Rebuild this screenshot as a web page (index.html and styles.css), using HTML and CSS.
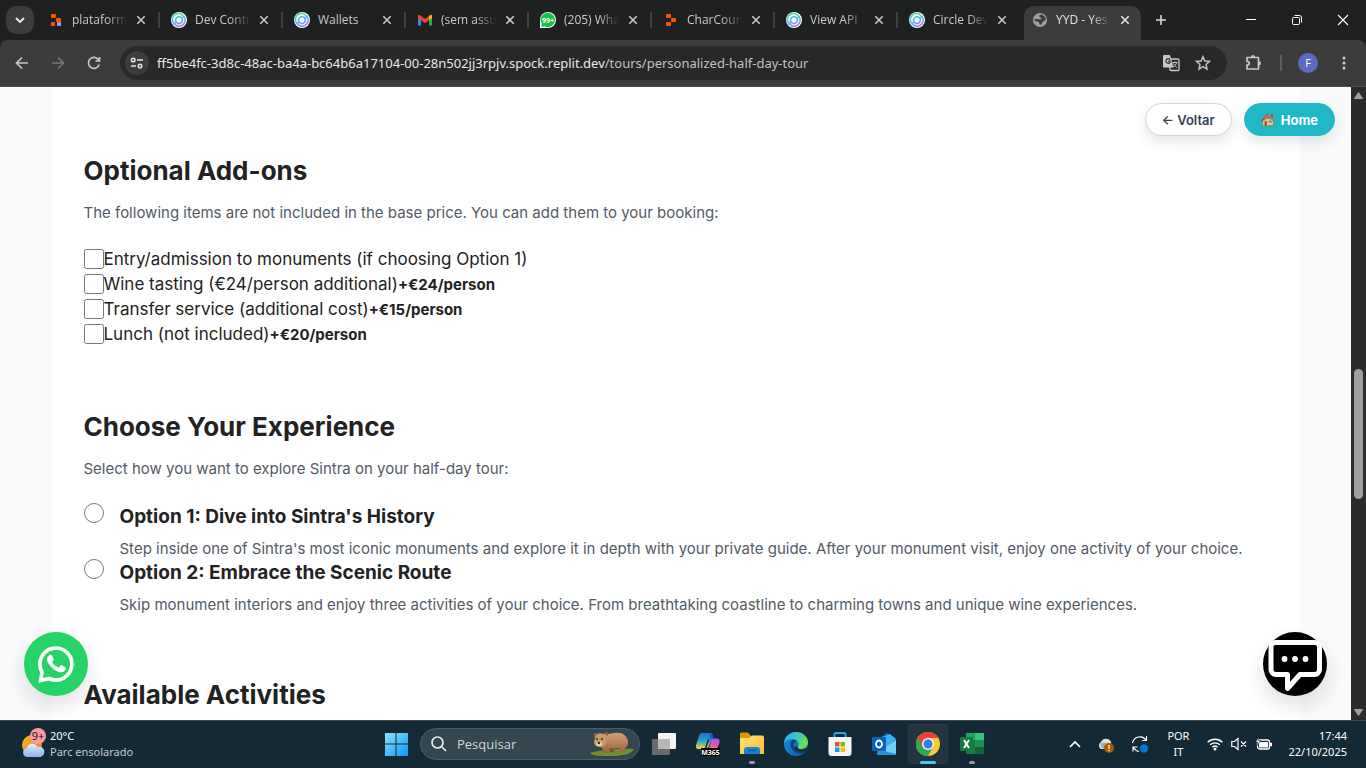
FILE: index.html
```html
<!DOCTYPE html>
<html lang="pt">
<head>
<meta charset="utf-8">
<title>YYD - Yes</title>
<link rel="stylesheet" href="styles.css">
</head>
<body>
<svg class="defs" aria-hidden="true">
  <defs>
    <linearGradient id="ring" gradientUnits="userSpaceOnUse" x1="5" y1="2" x2="10" y2="14"><stop offset="0" stop-color="#57dcb4"/><stop offset=".5" stop-color="#5cb6f5"/><stop offset="1" stop-color="#a87af5"/></linearGradient>
    <linearGradient id="win" x1="0" y1="0" x2="1" y2="1"><stop offset="0" stop-color="#8ce2ff"/><stop offset="1" stop-color="#0b98f5"/></linearGradient>
    <linearGradient id="sun" x1="0" y1="0" x2="1" y2="1"><stop offset="0" stop-color="#f7bd27"/><stop offset="1" stop-color="#ee7417"/></linearGradient>
    <linearGradient id="cloud" x1="0" y1="0" x2="0" y2="1"><stop offset="0" stop-color="#e4edff"/><stop offset="1" stop-color="#8fb0ee"/></linearGradient>
    <linearGradient id="copA" x1="0" y1="0" x2="0" y2="1"><stop offset="0" stop-color="#1a6fd8"/><stop offset=".5" stop-color="#26a6c9"/><stop offset="1" stop-color="#ffd52e"/></linearGradient>
    <linearGradient id="copB" x1="0" y1="0" x2="0" y2="1"><stop offset="0" stop-color="#9a5bf0"/><stop offset=".5" stop-color="#e654a8"/><stop offset="1" stop-color="#ff8b5c"/></linearGradient>
    <linearGradient id="fold" x1="0" y1="0" x2="1" y2="1"><stop offset="0" stop-color="#ffe27a"/><stop offset="1" stop-color="#fcbd2c"/></linearGradient>
    <linearGradient id="edgeTop" x1="0" y1="0" x2="1" y2=".4"><stop offset="0" stop-color="#2ba7e4"/><stop offset=".5" stop-color="#35c6d2"/><stop offset="1" stop-color="#6bdf4e"/></linearGradient>
    <linearGradient id="edgeLow" x1="0" y1="0" x2="1" y2="1"><stop offset="0" stop-color="#1b8fdc"/><stop offset="1" stop-color="#1257a8"/></linearGradient>
    <linearGradient id="fur" x1="0" y1="0" x2="0" y2="1"><stop offset="0" stop-color="#d3a072"/><stop offset="1" stop-color="#966345"/></linearGradient>
    <symbol id="circle" viewBox="0 0 16 16"><circle cx="8" cy="8" r="8" fill="#fff"/><g fill="none" stroke="url(#ring)" stroke-width="1.700" stroke-linecap="round"><path d="M3.200 11.800A6 6 0 0 1 11.500 3.100M12.800 4.400A6 6 0 0 1 4.600 13"/><path d="M5.600 10.500A3.400 3.400 0 0 1 9.800 5.200M10.700 6A3.400 3.400 0 0 1 6.500 11.100M3.200 11.800l2-2M10.800 6.200l2-1.800"/></g></symbol>
    <symbol id="x" viewBox="0 0 10 10"><path d="M1.300 1.300l7.400 7.400M8.700 1.300l-7.400 7.400" stroke="currentColor" stroke-width="1.600"/></symbol>
  </defs>
</svg>

<header class="browser">
  <div class="tabstrip">
    <button class="tab-search" aria-label="Search tabs"><svg width="10" height="6" viewBox="0 0 10 6"><path d="M1 1l4 4 4-4" fill="none" stroke="#e3e3e3" stroke-width="2"/></svg></button>
    <nav class="tabs" aria-label="Tabs">
      <div class="tab"><svg class="fav" viewBox="0 0 16 16"><g fill="#fd5402"><rect x="3" y="2" width="5" height="4" rx="1"/><rect x="3" y="10" width="4" height="4" rx="1"/><rect x="8" y="6" width="5" height="4" rx="1"/></g><rect x="9" y="10" width="4" height="4" rx="1" fill="#a68bf5"/></svg><a href="#" class="label">plataform</a><button class="close" aria-label="Close"><svg><use href="#x"/></svg></button></div>
      <div class="tab"><svg class="fav"><use href="#circle"/></svg><a href="#" class="label">Dev Contr</a><button class="close" aria-label="Close"><svg><use href="#x"/></svg></button></div>
      <div class="tab"><svg class="fav"><use href="#circle"/></svg><a href="#" class="label whole">Wallets</a><button class="close" aria-label="Close"><svg><use href="#x"/></svg></button></div>
      <div class="tab"><svg class="fav" viewBox="0 0 16 16"><path d="M1 5v8.500h3V7z" fill="#4285f4"/><path d="M12 7v6.500h3V5z" fill="#34a853"/><path d="M12 4l1.300-1C14.200 2.400 15 3 15 4v2l-3 2.300z" fill="#fbbc04"/><path d="M1 6V4c0-1 .8-1.600 1.700-1L8 7l4-3v4.200L8 11.200 4 8.200z" fill="#ea4335"/></svg><a href="#" class="label">(sem assu</a><button class="close" aria-label="Close"><svg><use href="#x"/></svg></button></div>
      <div class="tab"><svg class="fav" viewBox="0 0 16 16"><path d="M0 16V8a8 8 0 1 1 8 8z" fill="#fff"/><path d="M1 15l.7-3.200a7.200 7.200 0 1 1 2.700 2.500z" fill="#16c34a"/><text x="8" y="10.500" text-anchor="middle" class="badge-text">99+</text></svg><a href="#" class="label">(205) Wha</a><button class="close" aria-label="Close"><svg><use href="#x"/></svg></button></div>
      <div class="tab"><svg class="fav" viewBox="0 0 16 16"><g fill="#fd5402"><rect x="3" y="2" width="5" height="4" rx="1"/><rect x="3" y="10" width="5" height="4" rx="1"/><rect x="8" y="6" width="5" height="4" rx="1"/></g></svg><a href="#" class="label">CharCoun</a><button class="close" aria-label="Close"><svg><use href="#x"/></svg></button></div>
      <div class="tab"><svg class="fav"><use href="#circle"/></svg><a href="#" class="label">View API</a><button class="close" aria-label="Close"><svg><use href="#x"/></svg></button></div>
      <div class="tab before-active"><svg class="fav"><use href="#circle"/></svg><a href="#" class="label">Circle Dev</a><button class="close" aria-label="Close"><svg><use href="#x"/></svg></button></div>
      <div class="tab active"><svg class="fav" viewBox="0 0 16 16"><circle cx="8" cy="8" r="7" fill="#9aa0a6"/><path d="M9 2.500C6.500 3 7 5 8.500 5.500S10 7.600 8 7.500 4 6.500 2.200 7.500c.5 2 2.300 2 3.800 2.300S7 12.500 8.300 13c2-.5 1-2.500 2.700-3.200s2-2 2.800-2.500C13.500 5.500 12 3 9 2.500z" fill="#3c3c3c"/></svg><a href="#" class="label">YYD - Yes</a><button class="close" aria-label="Close"><svg><use href="#x"/></svg></button></div>
    </nav>
    <button class="new-tab" aria-label="New tab"><svg width="10" height="10" viewBox="0 0 10 10"><path d="M5 0v10M0 5h10" stroke="#dadada" stroke-width="1.600"/></svg></button>
    <div class="window-controls">
      <button aria-label="Minimize"><svg viewBox="0 0 12 12"><path d="M1 5.500h10" stroke="#fff"/></svg></button>
      <button aria-label="Restore"><svg viewBox="0 0 12 12" fill="none" stroke="#fff"><rect x="1.500" y="3.500" width="7" height="7" rx="1"/><path d="M3.500 1.500h5a2 2 0 0 1 2 2v5"/></svg></button>
      <button aria-label="Close window"><svg viewBox="0 0 12 12"><path d="M1 1l10 10M11 1L1 11" stroke="#fff" stroke-width="1.200"/></svg></button>
    </div>
  </div>
  <div class="toolbar">
    <div class="nav-buttons">
      <button aria-label="Back"><svg viewBox="0 0 16 16"><path d="M14 8H3M8 2.500L2.500 8 8 13.500" /></svg></button>
      <button aria-label="Forward" disabled><svg viewBox="0 0 16 16"><path d="M2 8h11M8 2.500L13.500 8 8 13.500"/></svg></button>
      <button aria-label="Reload"><svg viewBox="0 0 16 16"><path d="M13.200 9.500A5.500 5.500 0 1 1 12 4.200l1.500 1.500M13.500 2v4h-4"/></svg></button>
    </div>
    <div class="omnibox">
      <button class="site-info" aria-label="Site information"><svg width="14" height="12" viewBox="0 0 14 12" fill="none" stroke="#e3e3e3" stroke-width="1.500"><circle cx="3.200" cy="3" r="1.800"/><path d="M7 3h6M1 9h5"/><circle cx="10" cy="9" r="1.800"/></svg></button>
      <div class="url" role="textbox" aria-label="Address"><span>ff5be4fc-3d8c-48ac-ba4a-bc64b6a17104-00-28n502jj3rpjv.spock.replit.dev</span><span class="path">/tours/personalized-half-day-tour</span></div>
      <button class="omni-icon" aria-label="Translate"><svg width="18" height="18" viewBox="0 0 18 18"><rect x="8" y="5" width="9" height="11.500" rx="1" fill="none" stroke="#c7c7c7" stroke-width="1.300"/><path d="M2 1h6l3.500 12.500H2a1.200 1.200 0 0 1-1-1V2a1 1 0 0 1 1-1z" fill="#c7c7c7"/><path d="M8 5.500A2.300 2.300 0 1 0 8 8.500V7H6" fill="none" stroke="#282828" stroke-width="1.200"/><path d="M10.500 8.500h5M13 7.500v1M14.700 8.500c-.5 2-2 3.500-3.500 4.300M11.500 9.500c.6 1.500 2 3 3.500 4" fill="none" stroke="#c7c7c7"/></svg></button>
      <button class="omni-icon" aria-label="Bookmark"><svg width="16" height="16" viewBox="0 0 16 16"><path d="M8 1.700l1.800 4.300 4.700.4-3.500 3.100 1 4.500-4-2.400L4 14l1-4.500L1.500 6.400l4.700-.4z" fill="none" stroke="#c7c7c7" stroke-width="1.400"/></svg></button>
    </div>
    <div class="toolbar-end">
      <button aria-label="Extensions"><svg width="18" height="18" viewBox="0 0 18 18"><path d="M2 3.500h11.500v11.500H2v-4c3 0 3-3.700 0-3.700z" fill="none" stroke="#c7c7c7" stroke-width="1.700" stroke-linejoin="round"/><path d="M6 3a2 2 0 0 1 4 0zM14 7.200a2 2 0 0 1 0 4z" fill="#c7c7c7"/></svg></button>
      <span class="divider"></span>
      <button class="avatar" aria-label="Profile">F</button>
      <button class="menu" aria-label="Menu"><svg width="4" height="14" viewBox="0 0 4 14" fill="#d0d0d0"><circle cx="2" cy="2" r="1.500"/><circle cx="2" cy="7" r="1.500"/><circle cx="2" cy="12" r="1.500"/></svg></button>
    </div>
  </div>
</header>

<div class="viewport">
  <div class="page">
    <main class="content">
      <section>
        <h2>Optional Add-ons</h2>
        <p class="lead">The following items are not included in the base price. You can add them to your booking:</p>
        <label class="addon"><input type="checkbox"><span>Entry/admission to monuments (if choosing Option 1)</span></label>
        <label class="addon"><input type="checkbox"><span>Wine tasting (€24/person additional)</span><strong>+€24/person</strong></label>
        <label class="addon"><input type="checkbox"><span>Transfer service (additional cost)</span><strong>+€15/person</strong></label>
        <label class="addon"><input type="checkbox"><span>Lunch (not included)</span><strong>+€20/person</strong></label>
      </section>
      <section>
        <h2>Choose Your Experience</h2>
        <p class="lead">Select how you want to explore Sintra on your half-day tour:</p>
        <div class="option">
          <input type="radio" name="option" id="option1">
          <label for="option1"><span class="option-title">Option 1: Dive into Sintra's History</span><span class="option-text">Step inside one of Sintra's most iconic monuments and explore it in depth with your private guide. After your monument visit, enjoy one activity of your choice.</span></label>
        </div>
        <div class="option">
          <input type="radio" name="option" id="option2">
          <label for="option2"><span class="option-title">Option 2: Embrace the Scenic Route</span><span class="option-text">Skip monument interiors and enjoy three activities of your choice. From breathtaking coastline to charming towns and unique wine experiences.</span></label>
        </div>
      </section>
      <section>
        <h2>Available Activities</h2>
      </section>
    </main>
    <div class="quick-nav">
      <button class="pill back">← Voltar</button>
      <a class="pill home" href="#"><svg width="14" height="14" viewBox="0 0 14 14"><path d="M2 6h10v7H2z" fill="#f3c184"/><path d="M7.500 6.500L7 0 0 7.500l1 1.200L7 3z" fill="#b64b36"/><path d="M7 1l7 7-1.200 1L7 3.500 3 8V5z" fill="#d9664a"/><path d="M10 1h2v4l-2-2z" fill="#a6503c"/><path d="M3.500 8H6v5H3.500z" fill="#a05a3d"/><path d="M7.800 7.500h3V10h-3z" fill="#4aa5d9"/><path d="M0 12.500h3.500v1H0zM7 12h7v1.500H7z" fill="#69a646"/></svg>Home</a>
    </div>
    <button class="bubble whatsapp" aria-label="WhatsApp"><svg width="40" height="40" viewBox="0 0 40 40"><path d="M6 28A16 16 0 1 1 13 34.500L4.800 36.500z" fill="none" stroke="#fff" stroke-width="3.700"/><path transform="translate(2.500 -1) scale(.08)" stroke="#fff" stroke-width="10" fill="#fff" d="M325.100 300.500c-5.500-2.800-32.800-16.200-37.900-18-5.100-1.900-8.800-2.800-12.500 2.800-3.700 5.600-14.300 18-17.600 21.800-3.200 3.700-6.500 4.200-12 1.400-32.600-16.300-54-29.100-75.500-66-5.700-9.800 5.700-9.100 16.300-30.300 1.800-3.700.9-6.900-.5-9.700-1.400-2.800-12.500-30.100-17.100-41.200-4.500-10.800-9.100-9.300-12.500-9.500-3.200-.2-6.900-.2-10.600-.2-3.700 0-9.700 1.400-14.800 6.900-5.100 5.600-19.400 19-19.400 46.300 0 27.300 19.900 53.700 22.600 57.400 2.800 3.700 39.100 59.700 94.800 83.800 35.200 15.200 49 16.500 66.600 13.900 10.700-1.600 32.800-13.400 37.400-26.400 4.600-13 4.600-24.100 3.200-26.400-1.300-2.500-5-3.900-10.500-6.600z"/></svg></button>
    <button class="bubble chat" aria-label="Chat"><svg width="64" height="64" viewBox="0 0 64 64"><path d="M12 10.500h40a4.500 4.500 0 0 1 4.500 4.500v22.500a5 5 0 0 1-5 5H37L24.500 56.500V42.500H13a5 5 0 0 1-5-5V15a4.500 4.500 0 0 1 4-4.500z" fill="none" stroke="#fff" stroke-width="5" stroke-linejoin="round"/><g fill="#fff"><circle cx="21.500" cy="27" r="2.900"/><circle cx="32" cy="27" r="2.900"/><circle cx="42.500" cy="27" r="2.900"/></g></svg></button>
  </div>
  <div class="scrollbar" aria-hidden="true">
    <svg width="9" height="7" viewBox="0 0 9 7"><path d="M4.500.5L8.500 6.500h-8z" fill="#9f9f9f" stroke="#9f9f9f" stroke-linejoin="round"/></svg>
    <div class="track"><div class="thumb"></div></div>
    <svg width="9" height="7" viewBox="0 0 9 7"><path d="M4.500 6.500L8.500.5h-8z" fill="#9f9f9f" stroke="#9f9f9f" stroke-linejoin="round"/></svg>
  </div>
</div>

<footer class="taskbar">
  <button class="weather">
    <svg width="26" height="32" viewBox="0 0 26 32"><circle cx="11" cy="17" r="10" fill="url(#sun)"/><path d="M6 29a4.500 4.500 0 0 1-.5-8.800 6 6 0 0 1 11-1.500 5 5 0 0 1 3 10.300z" fill="url(#cloud)"/><circle cx="17" cy="8" r="8" fill="#ff98a5"/><text x="17" y="12" text-anchor="middle" class="alert-text">9+</text></svg>
    <span class="weather-text"><span>20°C</span><span class="dim">Parc ensolarado</span></span>
  </button>
  <div class="apps">
    <button class="app" aria-label="Start"><svg viewBox="0 0 24 24"><path d="M1 1h10.500v10.500H1zM12.500 1H24v10.500H12.500zM1 12.500h10.500V24H1zM12.500 12.500H24V24H12.500z" fill="url(#win)"/></svg></button>
    <div class="search">
      <svg width="16" height="16" viewBox="0 0 16 16" fill="none" stroke="#e6eaed" stroke-width="1.700"><circle cx="6.500" cy="6.500" r="5.500"/><path d="M10.500 10.500L15 15"/></svg>
      <input type="text" aria-label="Pesquisar" placeholder="Pesquisar">
      <svg width="46" height="26" viewBox="0 0 46 26"><path d="M1 22c8-3 34-5 44-4-2 5-12 7-22 7S2 25 1 22z" fill="#758c2e"/><path d="M24 17l1 4h-4l-2-6zM33 15l3 5h-4z" fill="#754c36"/><path d="M12 4c6-1 9-1 13-2 7-1.500 13 2 14 8 .5 4-1 6-3 7l-1 4h-4l-1-4c-4 1-7 1-9 0l-1 5h-5l-2-5-4-4z" fill="url(#fur)"/><path d="M5 2l3 1c3-1 4-1 6 0l4-2 1 4-2 3c1 4-1 8-5 8s-7-2-7-5c0-1 .5-2 1-3z" fill="#c9976c"/><path d="M5 2l3 1-2 3zM18 1l1 4-4-2z" fill="#8b5a3c"/><circle cx="8" cy="8" r=".9" fill="#222"/><circle cx="13" cy="8" r=".9" fill="#222"/><ellipse cx="10" cy="13" rx="3" ry="2.200" fill="#ead0b2"/><circle cx="9.800" cy="12" r="1.200" fill="#3b2518"/></svg>
    </div>
    <button class="app" aria-label="Task view"><svg viewBox="0 0 24 24"><rect x="6" y="1" width="18" height="16" rx="1" fill="#f4f4f4"/><rect x="0" y="7" width="18" height="16" rx="1" fill="#777" opacity=".85"/><rect x="6" y="7" width="12" height="10" fill="#b8b8b8"/></svg></button>
    <button class="app" aria-label="Microsoft 365 Copilot"><svg viewBox="0 0 24 24"><path d="M6 1h8c2 0 3 1 2.500 3L13 14c-1 2-2 3-4 3H2c-2 0-2.500-2-2-4L3 4c.6-2 1.500-3 3-3z" fill="url(#copA)"/><path d="M15.500 6.500H21c2 0 3 2 2.500 4L21 17c-.5 2-2 3-4 3h-7c2-1 3-3 3.500-5z" fill="url(#copB)"/><path d="M13.500 7l-3 9H8.800l2.700-7.500c.4-1 1-1.500 2-1.500z" fill="#122935"/><path d="M14 1c2 0 2.500 1 3 2.500l1 3h-4.500z" fill="#1b52c4"/><path d="M5 16h19v8H5z" fill="#000"/><text x="14.500" y="23" text-anchor="middle" class="m365-text">M365</text></svg></button>
    <button class="app running" aria-label="Explorer"><svg viewBox="0 0 24 24"><path d="M0 2c0-1 .5-1.500 1.500-1.500H8L11 4v4H0z" fill="#dc9800"/><path d="M0 6h9l3-2.500h11L24 5v17H0z" fill="url(#fold)"/><path d="M4 22v-4a3 3 0 0 1 3-3h10a3 3 0 0 1 3 3v4z" fill="#1487d4"/><path d="M8 18.500h8" stroke="#075b9e" stroke-width="1.500"/></svg></button>
    <button class="app" aria-label="Edge"><svg viewBox="0 0 24 24"><circle cx="12" cy="12" r="12" fill="url(#edgeLow)"/><path d="M0 11C1 4 6 0 12 0c7 0 12 5 12 10 0 4-3 7-7 7-3 0-4-1-3-2.500C16 11 13 7 8 7c-3 0-6 1.500-8 4z" fill="url(#edgeTop)"/><path d="M8 8c-3 4-1 11 5 13 4 1.300 8 0 9.500-2.500C19 20 12 19 10 15c-1-2 0-5 3-6-1-.8-3-1.500-5-1z" fill="#10427f"/><path d="M14 14.500C12 17 17 19 23.200 16l-1 3C17 21 11 19 10.500 15z" fill="#132936"/></svg></button>
    <button class="app" aria-label="Store"><svg viewBox="0 0 24 24"><path d="M6.500 6V2.500c0-1 .5-1.500 1.500-1.500h8c1 0 1.500.5 1.500 1.500V6" fill="none" stroke="#25afe8" stroke-width="1.800"/><path d="M.5 5h23v16a3 3 0 0 1-3 3h-17a3 3 0 0 1-3-3z" fill="#f5f5f5"/><path d="M7 10h4.500v4.500H7z" fill="#f25022"/><path d="M12.500 10H17v4.500h-4.500z" fill="#7fba00"/><path d="M7 15.500h4.500V20H7z" fill="#00a4ef"/><path d="M12.500 15.500H17V20h-4.500z" fill="#ffb900"/></svg></button>
    <button class="app" aria-label="Outlook"><svg viewBox="0 0 24 24"><path d="M5 8L15 1l9 6v14a2 2 0 0 1-2 2H6z" fill="#1767b5"/><path d="M10 5l8-3 6 5-10 9z" fill="#35b4ee"/><path d="M24 8v13a2 2 0 0 1-2 2H6l-1-2z" fill="#6ccff8"/><path d="M5 17l19 5-2 1H6z" fill="#2692df"/><rect x="0" y="5" width="14" height="14" rx="1" fill="#0a62bd"/><ellipse cx="7" cy="12" rx="3" ry="3.500" fill="none" stroke="#fff" stroke-width="1.800"/></svg></button>
    <button class="app current" aria-label="Chrome"><svg viewBox="0 0 24 24"><circle cx="12" cy="12" r="12" fill="#fcc934"/><path d="M12 12L1.600 6A12 12 0 0 0 12 24l5.200-9z" fill="#2da94f"/><path d="M12 6h10.400a12 12 0 0 0-20.800 0l5.200 9z" fill="#ea4335"/><circle cx="12" cy="12" r="6" fill="#fff"/><circle cx="12" cy="12" r="4.700" fill="#3b7ded"/></svg></button>
    <button class="app running" aria-label="Excel"><svg viewBox="0 0 24 24"><path d="M6 1h18v21H6z" fill="#187b45"/><path d="M15 1h9v7h-9z" fill="#36c481"/><path d="M6 1h9v7H6z" fill="#21a366"/><path d="M15 8h9v7h-9z" fill="#218d56"/><path d="M15 15h9v7h-9z" fill="#12633b"/><rect x="0" y="5" width="13" height="14" rx="1" fill="#107c41"/><path d="M4 8l5 8M9 8l-5 8" stroke="#fff" stroke-width="2"/></svg></button>
  </div>
  <div class="tray">
    <button aria-label="Hidden icons"><svg width="12" height="8" viewBox="0 0 12 8"><path d="M1 7l5-5 5 5" fill="none" stroke="#fff" stroke-width="1.600"/></svg></button>
    <button aria-label="OneDrive"><svg width="18" height="18" viewBox="0 0 18 18"><path d="M4 14a4 4 0 0 1 0-7 5.500 5.500 0 0 1 10 0l1 7z" fill="#ddd"/><path d="M6 14l-3-5c3-2 7-1 9 0z" fill="#aaa"/><circle cx="12" cy="13" r="5" fill="#a95700"/><path d="M12 10v4M12 15v1.200" stroke="#fff" stroke-width="1.300"/></svg></button>
    <button aria-label="Sync"><svg width="18" height="18" viewBox="0 0 18 18"><path d="M1.500 8a7.500 7.500 0 0 1 13.500-3M15.500 1v4.500h-4.500M2 16.500V12h4.500M2.500 12.500A8 8 0 0 0 8 16.500" fill="none" stroke="#fff" stroke-width="1.200"/><circle cx="13" cy="13.500" r="4.200" fill="#0078d7"/></svg></button>
    <button class="lang"><span>POR</span><span>IT</span></button>
    <button class="status" aria-label="Network, volume, battery">
      <svg width="16" height="14" viewBox="0 0 16 14" fill="none" stroke="#fff" stroke-width="1.400"><path d="M.7 5.200a10.500 10.500 0 0 1 14.600 0M3.200 7.800a7 7 0 0 1 9.600 0M5.400 10.200a4 4 0 0 1 5.200 0"/><circle cx="8" cy="12" r=".8" fill="#fff"/></svg>
      <svg width="16" height="14" viewBox="0 0 16 14" fill="none" stroke="#fff" stroke-width="1.200"><path d="M.8 4.500h2.700L7 1.500v11L3.500 9.500H.8zM10 4.500l5 5M15 4.500l-5 5"/></svg>
      <svg width="17" height="14" viewBox="0 0 17 14"><rect x="2.500" y="3" width="12" height="9" rx="2" fill="none" stroke="#fff" stroke-width="1.300"/><rect x="4" y="5" width="9" height="5.500" fill="#fff"/><path d="M15.500 6v3h1V6z" fill="#fff" stroke="#fff"/><path d="M4 0L.5 5H3L2 8.500 6 3.500H3.500z" fill="#fff" stroke="#132936" stroke-width=".6"/></svg>
    </button>
    <button class="clock"><span>17:44</span><span>22/10/2025</span></button>
  </div>
</footer>
</body>
</html>
```
FILE: styles.css
```css
* { box-sizing: border-box; }
html, body { height: 100%; }
body {
  margin: 0;
  display: flex;
  flex-direction: column;
  overflow: hidden;
  font-family: "Open Sans", "Noto Sans", sans-serif;
  background: #1f2120;
}
button { border: 0; padding: 0; background: none; color: inherit; font: inherit; }
a { color: inherit; text-decoration: none; }
svg { display: block; flex: none; }
.defs { position: absolute; width: 0; height: 0; }

/* Browser chrome */
.browser { flex: none; background: #1f2120; color: #c8c8c8; }
.tabstrip { display: flex; height: 40px; align-items: center; }
.tab-search {
  display: grid;
  place-items: center;
  flex: none;
  width: 28px;
  height: 28px;
  margin: 0 3px 0 6px;
  border-radius: 10px;
  background: #3c3c3c;
}
.tabs { display: flex; flex: 0 1 1107px; align-self: stretch; min-width: 0; padding-top: 6px; }
.tab {
  position: relative;
  display: flex;
  align-items: center;
  flex: 0 1 123px;
  min-width: 0;
  padding: 0 14px 6px 11px;
}
.tab::after {
  content: "";
  position: absolute;
  right: 0;
  top: 6px;
  width: 2px;
  height: 16px;
  background: #3f4040;
}
.tab.before-active::after, .tab.active::after { display: none; }
.fav { width: 16px; height: 16px; }
.label {
  flex: 1;
  min-width: 0;
  margin: 0 6px 0 8px;
  white-space: nowrap;
  font-size: 12px;
  line-height: 18px;
  -webkit-mask-image: linear-gradient(90deg, #000 60%, transparent 96%);
  mask-image: linear-gradient(90deg, #000 60%, transparent 96%);
}
.label.whole { -webkit-mask-image: none; mask-image: none; }
.close svg { width: 10px; height: 10px; }
.active { color: #e3e3e3; isolation: isolate; }
.active::before {
  content: "";
  position: absolute;
  z-index: -1;
  inset: 0 3px;
  border-radius: 10px 10px 0 0;
  background: #3c3c3c;
}
.new-tab { margin-left: 12px; }
.window-controls { display: flex; margin-left: auto; }
.window-controls button { display: grid; place-items: center; width: 46px; height: 40px; }
.window-controls svg { width: 12px; height: 12px; }
.toolbar {
  display: flex;
  align-items: center;
  height: 47px;
  padding: 0 20px 0 14px;
  border-bottom: 1px solid #4a4a4a;
  border-radius: 8px 8px 0 0;
  background: #3c3c3c;
}
.nav-buttons { display: flex; gap: 20px; margin-right: 18px; color: #c7c7c7; }
.nav-buttons button:disabled { color: #757575; }
.nav-buttons svg { width: 16px; height: 16px; fill: none; stroke: currentColor; stroke-width: 1.700; }
.omnibox {
  display: flex;
  flex: 1;
  align-items: center;
  min-width: 0;
  height: 34px;
  padding: 0 16px 0 5px;
  border-radius: 17px;
  background: #282828;
}
.site-info {
  display: grid;
  place-items: center;
  flex: none;
  width: 24px;
  height: 24px;
  border-radius: 50%;
  background: #3c3c3c;
}
.url {
  flex: 1;
  min-width: 0;
  overflow: hidden;
  padding-left: 8px;
  white-space: nowrap;
  font-family: "Noto Sans", sans-serif;
  font-size: 13px;
  line-height: 20px;
  color: #e8e8e8;
}
.path { color: #c2c2c2; }
.omni-icon { margin-left: 15px; }
.toolbar-end { display: flex; align-items: center; margin-left: 18px; }
.divider { width: 2px; height: 16px; margin: 0 16px 0 17px; background: #5c5c5c; }
.avatar {
  width: 20px;
  height: 20px;
  border-radius: 50%;
  background: #5c6bc0;
  color: #fff;
  font-size: 11px;
  line-height: 20px;
}
.menu { margin-left: 24px; }
.badge-text { font: bold 7px "Open Sans", sans-serif; fill: #fff; }

/* Web page */
.viewport { display: flex; flex: 1; min-height: 0; }
.page {
  position: relative;
  flex: 1;
  min-width: 0;
  overflow: hidden;
  background: #f9fafc;
  color: #222;
  font-family: Inter, sans-serif;
}
.content {
  display: flex;
  flex-direction: column;
  gap: 64px;
  max-width: 1248px;
  min-height: 100%;
  margin: 0 auto;
  padding: 68px 32px 0;
  background: #fff;
}
h2 { margin: 0 0 16px; font-size: 26px; line-height: 32px; font-weight: 700; }
.lead { margin: 0 0 24px; font-size: 15px; line-height: 20px; color: #525b66; }
.addon { display: flex; align-items: center; height: 24px; margin-bottom: 1px; font-size: 17px; }
.addon strong { font-size: 15px; font-weight: 700; }
input[type="checkbox"], input[type="radio"] { flex: none; width: 20px; height: 20px; margin: 0; }
.option { display: flex; gap: 16px; }
.option-title { display: block; margin-bottom: 8px; font-size: 19px; line-height: 28px; font-weight: 700; }
.option-text { display: block; font-size: 15px; line-height: 20px; color: #525b66; }
.quick-nav { position: absolute; top: 16px; right: 16px; display: flex; gap: 12px; }
.pill {
  display: flex;
  align-items: center;
  gap: 6px;
  height: 33px;
  padding: 0 16px;
  border: 1px solid #d1d5db;
  border-radius: 17px;
  font-family: Inter, sans-serif;
  font-size: 13px;
  font-weight: 600;
  box-shadow: 0 6px 14px rgba(0, 0, 0, .1);
}
.back { background: #fff; color: #374151; }
.home { border-color: #20b7c6; background: #20b7c6; color: #fff; font-weight: 700; }
.bubble {
  position: absolute;
  bottom: 24px;
  display: grid;
  place-items: center;
  width: 64px;
  height: 64px;
  border-radius: 50%;
  box-shadow: 0 10px 22px rgba(0, 0, 0, .12);
}
.whatsapp { left: 24px; background: #25d366; }
.chat { right: 24px; background: #000; }
.scrollbar {
  display: flex;
  flex-direction: column;
  align-items: center;
  flex: none;
  width: 15px;
  padding: 5px 0 4px;
  background: #2c2c2c;
}
.track { flex: 1; padding-top: 270px; }
.thumb { width: 9px; height: 130px; border-radius: 5px; background: #9f9f9f; }

/* Taskbar */
.taskbar {
  display: grid;
  grid-template-columns: 1fr auto 1fr;
  align-items: center;
  flex: none;
  height: 48px;
  box-shadow: inset 0 1px #3b4a55;
  background: #132936;
  color: #fff;
  font-family: "Noto Sans", sans-serif;
  font-size: 11px;
}
.weather { display: flex; align-items: center; gap: 3px; padding-left: 21px; text-align: left; }
.weather-text, .lang, .clock { display: flex; flex-direction: column; line-height: 16px; }
.dim { color: #c3cbd1; }
.alert-text { font: 11px "Open Sans", sans-serif; fill: #111; }
.m365-text { font: bold 7px "Open Sans", sans-serif; fill: #fff; }
.apps { display: flex; align-items: center; gap: 4px; padding-left: 2px; }
.app {
  position: relative;
  display: grid;
  place-items: center;
  width: 40px;
  height: 40px;
  border-radius: 4px;
}
.app svg { width: 24px; height: 24px; }
.running::after, .current::after {
  content: "";
  position: absolute;
  bottom: 0;
  left: 17px;
  width: 6px;
  height: 3px;
  border-radius: 2px;
  background: #929ba1;
}
.current { background: #22343f; box-shadow: inset 0 0 0 1px #2b3d49; }
.current::after { left: 12px; width: 16px; background: #4cc2ff; }
.search {
  display: flex;
  align-items: center;
  gap: 8px;
  width: 220px;
  height: 32px;
  padding: 0 4px 0 10px;
  border: 1px solid #4b5c67;
  border-radius: 16px;
  background: #344650;
}
.search input {
  flex: 1;
  min-width: 0;
  padding: 0 0 0 2px;
  border: 0;
  outline: 0;
  background: none;
  color: #fff;
  font: 13px "Open Sans", sans-serif;
}
.search input::placeholder { color: #d0d6da; opacity: 1; }
.tray { display: flex; align-items: center; justify-content: flex-end; gap: 16px; padding-right: 19px; }
.lang { align-items: center; padding-left: 2px; }
.status { display: flex; align-items: center; gap: 8px; padding-left: 2px; }
.clock { align-items: flex-end; }
```
